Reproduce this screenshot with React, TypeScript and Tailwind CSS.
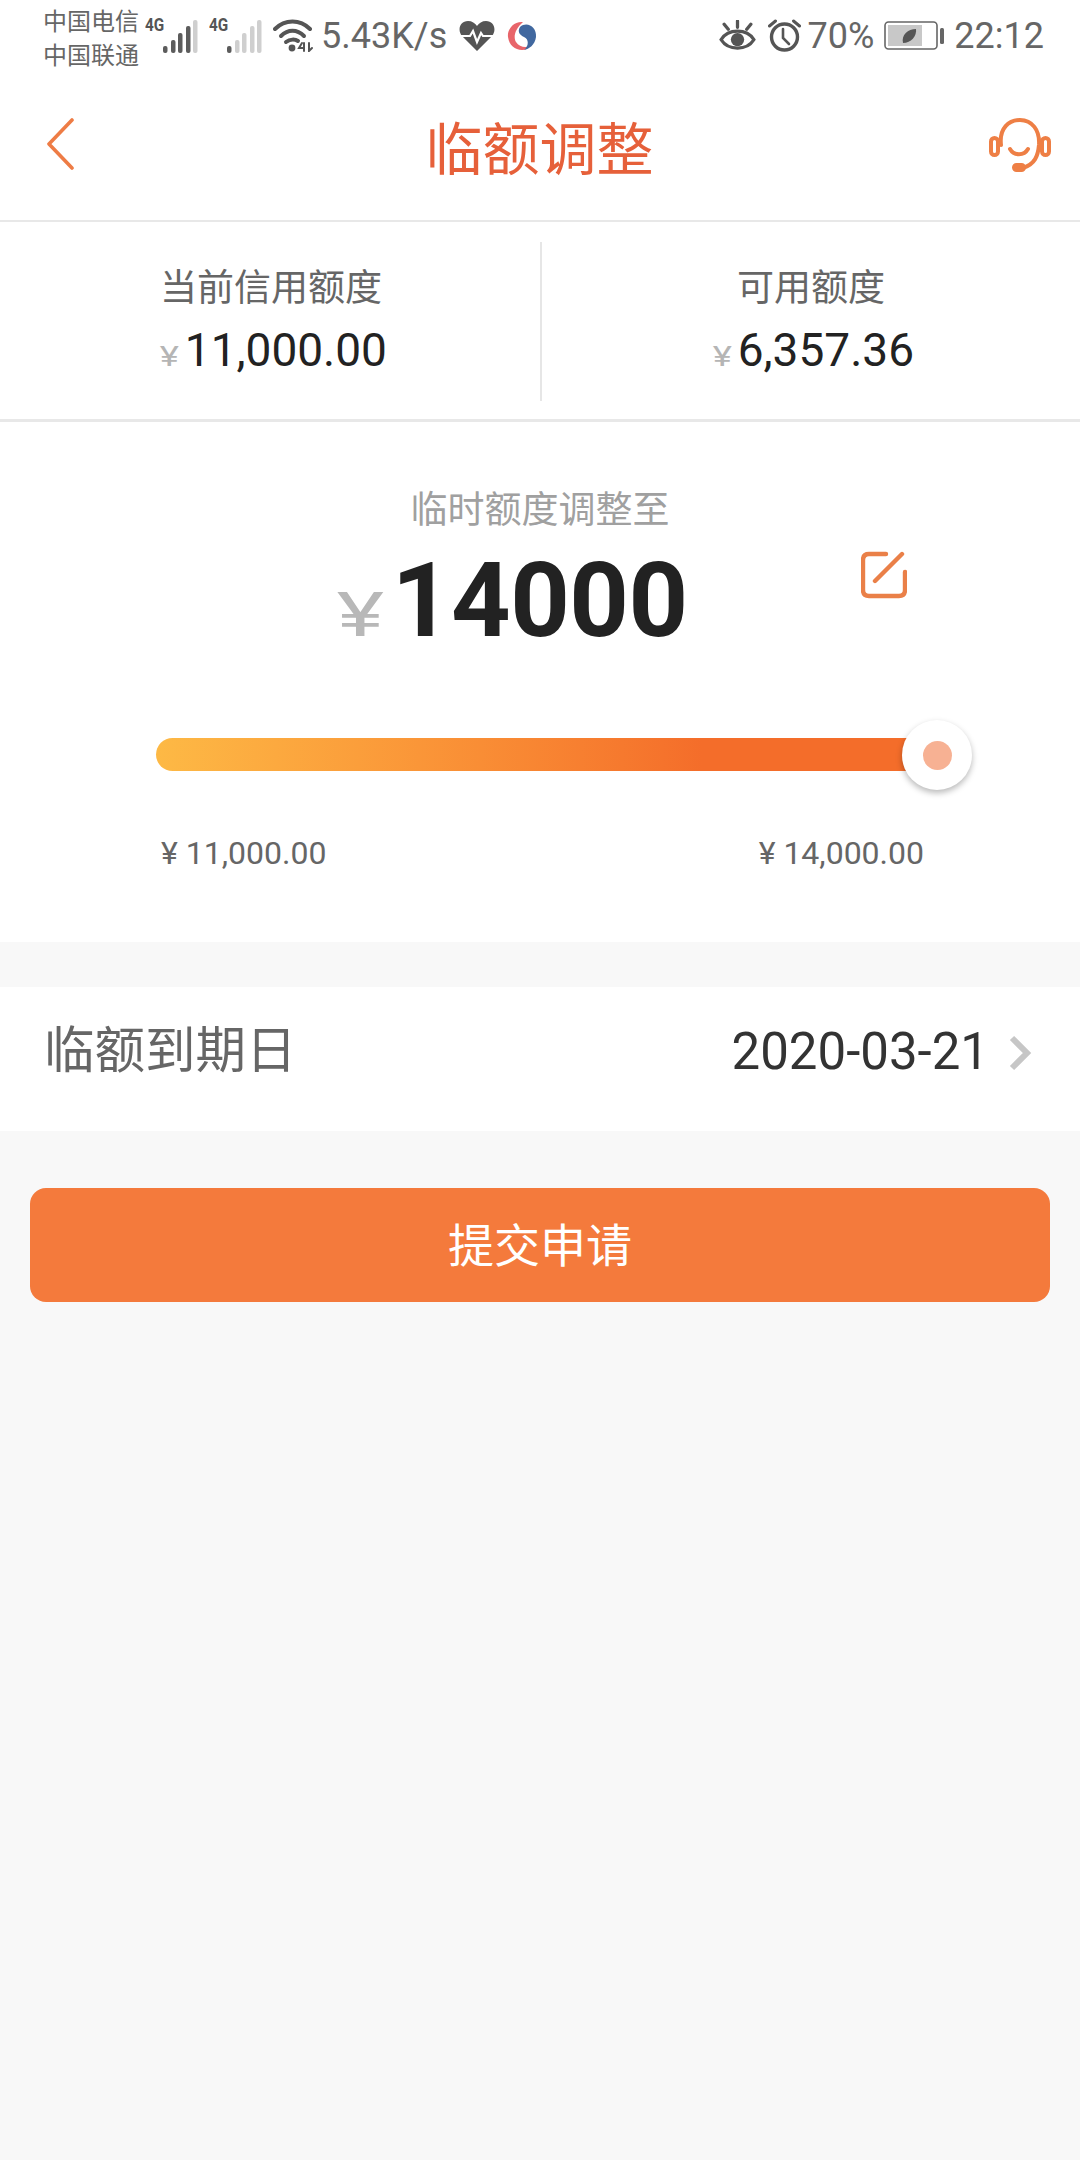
import React from 'react';

const font = { fontFamily: '"Roboto", "Noto Sans CJK SC", sans-serif' };

const Signal = ({ level }: { level: number }) => {
  const bars = [
    { x: 0, h: 7 },
    { x: 8, h: 13 },
    { x: 15, h: 20 },
    { x: 23, h: 27 },
    { x: 30, h: 33 },
  ];
  return (
    <svg width="35" height="34" viewBox="0 0 35 34" className="shrink-0">
      {bars.map((b, i) => (
        <rect
          key={i}
          x={b.x}
          y={34 - b.h}
          width="4.5"
          height={b.h}
          rx="2"
          fill={i < level ? '#5c5c5c' : '#cfcfcf'}
        />
      ))}
    </svg>
  );
};

const FourG = () => (
  <span className="w-[18px] shrink-0 self-start mt-[17px] text-[18px] leading-[16px] font-bold text-[#555] scale-x-85 origin-left whitespace-nowrap">
    4G
  </span>
);

const Wifi = () => (
  <svg width="40" height="33" viewBox="0 0 40 33" fill="none" stroke="#555" strokeWidth="4" strokeLinecap="round" className="shrink-0">
    <path d="M2 10 C12 0 27 0 37 10" />
    <path d="M8 17 C15 10 24 10 31 17" />
    <path d="M13 23 C17 20 22 20 25 22" />
    <circle cx="19" cy="29" r="3.4" fill="#555" stroke="none" />
    <path d="M29 24 L26 29 H31 M31 24 V32 M36 24 V32 L39 29" strokeWidth="2" />
  </svg>
);

const Heart = () => (
  <svg width="36" height="30" viewBox="0 0 36 30" className="shrink-0">
    <path d="M18 30 L3 15 C-2 9 1 0 9 0 C13 0 16 2 18 5 C20 2 23 0 27 0 C35 0 38 9 33 15 Z" fill="#555" />
    <path d="M1 15 H11 L14 10 L18 21 L22 12 L24 15 H35" fill="none" stroke="#fff" strokeWidth="2.2" />
  </svg>
);

const SwirlLogo = () => (
  <svg width="30" height="30" viewBox="0 0 30 30" className="shrink-0">
    <path d="M16 1 C7 0 0 8 1 16 C2 24 8 29 15 29 C19 29 21 27 22 25 C19 27 12 26 9 21 C6 16 8 8 16 1 Z" fill="#e8656a" />
    <path d="M13 6 C20 0 30 6 29 16 C28 24 22 28 17 29 C22 25 22 18 17 16 C13 14 10 11 13 6 Z" fill="#41689f" />
  </svg>
);

const Eye = () => (
  <svg width="37" height="31" viewBox="0 0 36 30" fill="none" stroke="#555" className="shrink-0">
    <path d="M2 19 C9 8 27 8 34 19 C27 30 9 30 2 19 Z" strokeWidth="3" />
    <circle cx="18" cy="19" r="6.5" fill="#555" stroke="none" />
    <path d="M18 1 V7 M5 4 L9 9 M31 4 L27 9" strokeWidth="3.2" strokeLinecap="round" />
  </svg>
);

const Alarm = () => (
  <svg width="33" height="33" viewBox="0 0 33 33" fill="none" stroke="#555" className="shrink-0">
    <circle cx="16.5" cy="18" r="13" strokeWidth="3.4" />
    <path d="M15 10 V19 L21 25" strokeWidth="2.6" strokeLinecap="round" />
    <path d="M1.5 7 L7.5 2 M31.5 7 L25.5 2" strokeWidth="3" strokeLinecap="round" />
  </svg>
);

const Battery = () => (
  <svg width="60" height="30" viewBox="0 0 60 30" className="shrink-0">
    <rect x="1" y="1" width="52" height="27" rx="3.5" fill="none" stroke="#666" strokeWidth="1.6" />
    <rect x="4" y="4" width="34" height="21" fill="#c8c8c8" />
    <path d="M19 22 C17 14 24 8 32 8 C33 15 27 22 19 22 Z" fill="#555" />
    <rect x="56" y="7" width="4" height="16" rx="1.5" fill="#666" />
  </svg>
);

const StatusBar = () => (
  <div className="h-[71px] bg-white flex items-center pl-[43px] pr-[36px] text-[#666]">
    <div className="flex flex-col text-[24px] leading-[34px] w-[102px] shrink-0 mt-[7px]">
      <span>中国电信</span>
      <span>中国联通</span>
    </div>
    <FourG />
    <Signal level={4} />
    <span className="w-[11px] shrink-0" />
    <FourG />
    <Signal level={1} />
    <span className="w-[11px] shrink-0" />
    <Wifi />
    <span className="ml-[8px] text-[36px] leading-none">5.43K/s</span>
    <span className="ml-[12px] flex"><Heart /></span>
    <span className="ml-[12px] flex"><SwirlLogo /></span>
    <div className="ml-auto flex items-center">
      <Eye />
      <span className="ml-[12px] flex"><Alarm /></span>
      <span className="ml-[7px] text-[36px] leading-none">70%</span>
      <span className="ml-[10px] flex"><Battery /></span>
      <span className="ml-[10px] text-[36px] leading-none">22:12</span>
    </div>
  </div>
);

const Header = () => (
  <div className="h-[151px] bg-white border-b-2 border-[#e8e8e8] flex items-center justify-between pl-[45px] pr-[29px] pb-[1px]">
    <svg width="30" height="52" viewBox="0 0 30 52" fill="none" stroke="#ee7c45" strokeWidth="3.6" strokeLinecap="round" strokeLinejoin="round" className="mb-[2px]">
      <path d="M27 2 L4 26 L27 50" />
    </svg>
    <h1 className="text-[57px] leading-none font-normal text-[#e6603a] mt-[11px] ml-[15px]">临额调整</h1>
    <svg width="62" height="56" viewBox="0 0 62 56" fill="none" stroke="#ee7f45" strokeWidth="4" strokeLinecap="round" className="mt-[2px]">
      <path d="M12 27 C10 10 20 2 31 2 C43 2 51 12 50 27 C49 38 46 46 34 50" />
      <path d="M21 31 C25 38 35 38 39 31" />
      <rect x="2" y="20" width="7" height="17" rx="3.5" />
      <rect x="53" y="20" width="7" height="17" rx="3.5" />
      <rect x="25" y="47" width="10" height="5" rx="2.5" fill="#ee7f45" />
    </svg>
  </div>
);

const Amount = ({ label, value }: { label: string; value: string }) => (
  <div className="flex-1 flex flex-col items-center pt-[4px]">
    <span className="text-[37px] leading-[44px] text-[#666]">{label}</span>
    <div className="flex items-baseline mt-[17px] ml-[7px]">
      <span className="text-[28px] leading-[44px] text-[#b5b5b5] mr-[8px] scale-x-130">¥</span>
      <span className="text-[46px] leading-[44px] text-[#222]">{value}</span>
    </div>
  </div>
);

const Limits = () => (
  <div className="h-[200px] bg-white border-b-[3px] border-[#e8e8e8] flex items-center pl-[2px]">
    <Amount label="当前信用额度" value="11,000.00" />
    <div className="w-[2px] h-[159px] bg-[#e6e6e6] shrink-0 mt-[1px]" />
    <Amount label="可用额度" value="6,357.36" />
  </div>
);

const Adjust = () => (
  <div className="h-[520px] bg-white flex flex-col items-center pt-[67px]">
    <span className="text-[37px] leading-[44px] text-[#a0a0a0]">临时额度调整至</span>
    <div className="relative w-full flex justify-center items-baseline mt-[18px] pr-[48px]">
      <span className="text-[62px] leading-[100px] text-[#b8b8b8] mr-[15px] scale-x-145">¥</span>
      <span className="text-[104px] leading-[100px] font-bold text-[#222] tracking-[-0.5px]">14000</span>
      <svg width="46" height="48" viewBox="0 0 46 48" fill="none" stroke="#ea8048" strokeWidth="4.4" strokeLinecap="round" className="absolute left-[861px] top-[0px]">
        <path d="M25 3 H8 C4 3 2 5 2 9 V39 C2 43 4 45 8 45 H38 C42 45 44 43 44 39 V21" />
        <path d="M14 30 L41 3" />
      </svg>
    </div>
    <div className="relative mt-[73px] ml-[156px] mr-[143px] self-stretch h-[33px] rounded-l-full bg-gradient-to-r from-[#fdb945] to-[#f46d2a] to-70%">
      <div className="absolute -right-[35px] -top-[18px] w-[70px] h-[70px] rounded-full bg-white shadow-[0_3px_6px_rgba(0,0,0,0.28)] flex items-center justify-center">
        <div className="w-[29px] h-[29px] rounded-full bg-[#f7b193]" />
      </div>
    </div>
    <div className="self-stretch flex justify-between mt-[64px] pl-[161px] pr-[156px] text-[32px] leading-[36px] text-[#666]">
      <span>¥ 11,000.00</span>
      <span>¥ 14,000.00</span>
    </div>
  </div>
);

const Expiry = () => (
  <div className="h-[144px] mt-[45px] bg-white flex items-center pl-[44px] pr-[48px] pb-[16px]">
    <span className="text-[50.5px] leading-none text-[#666]">临额到期日</span>
    <span className="ml-auto text-[51px] leading-none text-[#333]">2020-03-21</span>
    <svg width="24" height="36" viewBox="0 0 24 36" fill="none" stroke="#c6c6c6" strokeWidth="6" className="ml-[19px] mt-[3px]">
      <path d="M4 3 L19 18 L4 33" />
    </svg>
  </div>
);

export default function App() {
  return (
    <div className="w-[1080px] h-[2160px] bg-[#f8f8f8] overflow-hidden" style={font}>
      <StatusBar />
      <Header />
      <Limits />
      <Adjust />
      <Expiry />
      <div className="px-[30px] mt-[57px]">
        <button className="w-full h-[114px] pt-[2px] rounded-[16px] bg-[#f47a3c] text-white text-[46px]">提交申请</button>
      </div>
    </div>
  );
}
